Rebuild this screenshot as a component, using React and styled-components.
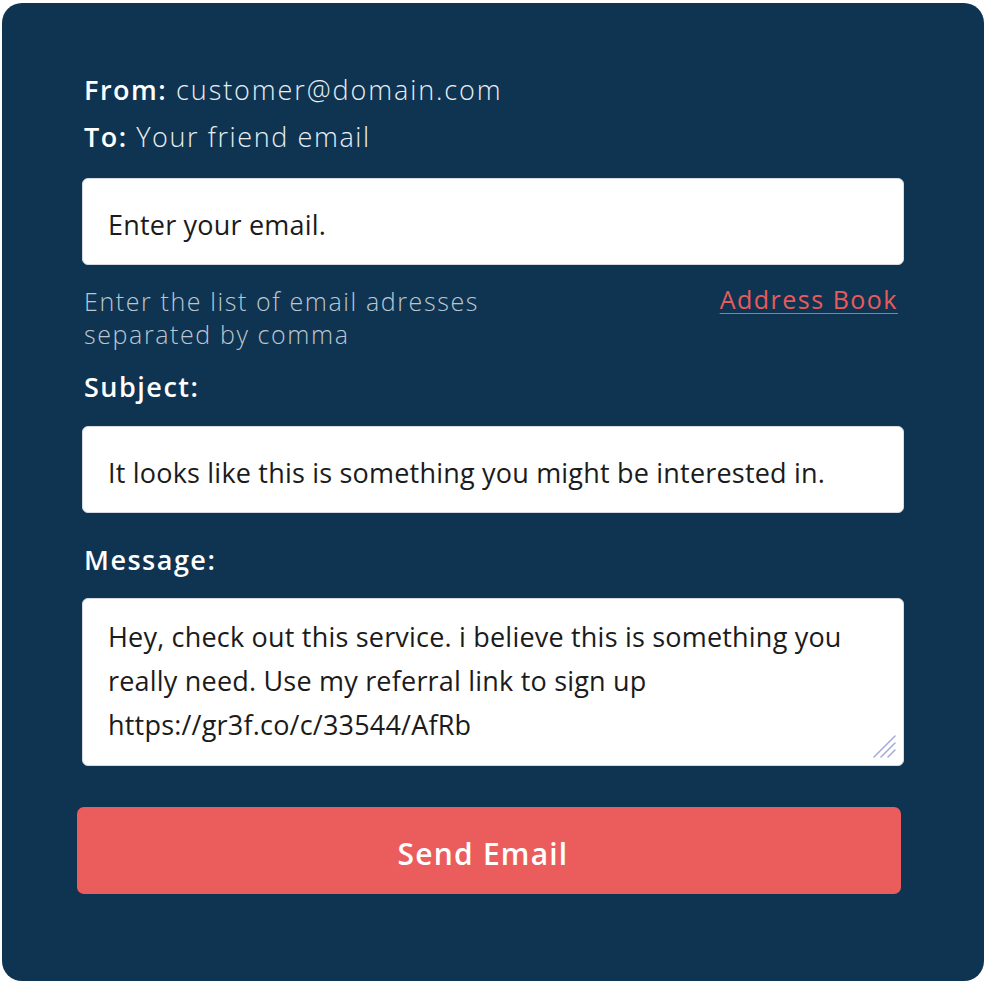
import React from 'react';
import styled, { createGlobalStyle } from 'styled-components';

const Global = createGlobalStyle`
    body {
        margin: 0;
        background: #fff;
        font-family: 'Open Sans', 'Noto Sans', sans-serif;
    }
`;

const Card = styled.form`
    box-sizing: border-box;
    width: 982px;
    height: 978px;
    margin: 3px 0 0 2px;
    padding: 63px 80px 0 80px;
    background: #0f3451;
    border-radius: 20px;
    display: flex;
    flex-direction: column;
`;

const Meta = styled.div`
    font-size: 27px;
    line-height: 47px;
    padding-left: 2px;
    color: #e9eef3;
    font-weight: 300;
    letter-spacing: ${p => p.$spacing}px;
    b {
        font-weight: 600;
        color: #fff;
        letter-spacing: 1.5px;
    }
`;

const Label = styled.label`
    display: block;
    font-size: 27px;
    line-height: 40px;
    font-weight: 600;
    color: #fff;
    padding-left: 2px;
    margin-top: ${p => p.$top}px;
    letter-spacing: 1.5px;
`;

const Field = styled.input`
    box-sizing: border-box;
    width: 822px;
    height: 87px;
    margin-top: ${p => p.$top}px;
    padding: 6px 25px 0;
    border: 1px solid #d5dbe1;
    border-radius: 6px;
    background: #fff;
    font-family: inherit;
    font-size: 27px;
    letter-spacing: 0.2px;
    color: #1b1b1b;
    outline: none;
    &::placeholder {
        color: #1b1b1b;
        opacity: 1;
    }
`;

const HintRow = styled.div`
    display: flex;
    justify-content: space-between;
    align-items: flex-start;
    margin-top: 20px;
    width: 816px;
    padding-left: 2px;
`;

const Hint = styled.p`
    margin: 0;
    font-size: 25px;
    line-height: 33px;
    font-weight: 300;
    letter-spacing: 1.6px;
    color: #bcc6d0;
`;

const BookLink = styled.a`
    font-size: 25px;
    line-height: 33px;
    letter-spacing: 1.5px;
    color: #e95a5c;
    text-decoration: underline;
    text-underline-offset: 4px;
    text-decoration-thickness: 1px;
    margin: -2px 2px 0 0;
`;

const AreaWrap = styled.div`
    position: relative;
    margin-top: 18px;
    width: 822px;
`;

const Area = styled.textarea`
    box-sizing: border-box;
    display: block;
    width: 822px;
    height: 168px;
    padding: 16px 20px 0 25px;
    border: 1px solid #d5dbe1;
    border-radius: 6px;
    background: #fff;
    font-family: inherit;
    font-size: 27px;
    letter-spacing: 0.2px;
    line-height: 44px;
    color: #1b1b1b;
    resize: none;
    outline: none;
    overflow: hidden;
`;

const Grip = styled.svg`
    position: absolute;
    right: 8px;
    bottom: 8px;
    pointer-events: none;
`;

const SendButton = styled.button`
    box-sizing: border-box;
    width: 824px;
    height: 87px;
    margin: 41px 0 0 -5px;
    padding: 5px 12px 0 0;
    border: none;
    border-radius: 7px;
    background: #eb5c5c;
    color: #fff;
    font-family: inherit;
    font-size: 30px;
    font-weight: 600;
    letter-spacing: 1.2px;
    cursor: pointer;
`;

const message =
    'Hey, check out this service. i believe this is something you\nreally need. Use my referral link to sign up\nhttps://gr3f.co/c/33544/AfRb';

export default function App() {
    return (
        <>
            <Global />
            <Card onSubmit={e => e.preventDefault()}>
                <Meta $spacing={1.9}>
                    <b>From:</b> customer@domain.com
                </Meta>
                <Meta $spacing={1.6}>
                    <b>To:</b> Your friend email
                </Meta>
                <Field $top={18} type="text" placeholder="Enter your email." />
                <HintRow>
                    <Hint>
                        Enter the list of email adresses
                        <br />
                        separated by comma
                    </Hint>
                    <BookLink href="#">Address Book</BookLink>
                </HintRow>
                <Label $top={16}>Subject:</Label>
                <Field $top={19} type="text" defaultValue="It looks like this is something you might be interested in." />
                <Label $top={27}>Message:</Label>
                <AreaWrap>
                    <Area defaultValue={message} />
                    <Grip width="24" height="24" viewBox="0 0 24 24">
                        <g stroke="#a3aad6" strokeWidth="1.5" strokeLinecap="round">
                            <line x1="2" y1="23" x2="23" y2="2" />
                            <line x1="9" y1="23" x2="23" y2="9" />
                            <line x1="16" y1="23" x2="23" y2="16" />
                        </g>
                    </Grip>
                </AreaWrap>
                <SendButton type="submit">Send Email</SendButton>
            </Card>
        </>
    );
}
